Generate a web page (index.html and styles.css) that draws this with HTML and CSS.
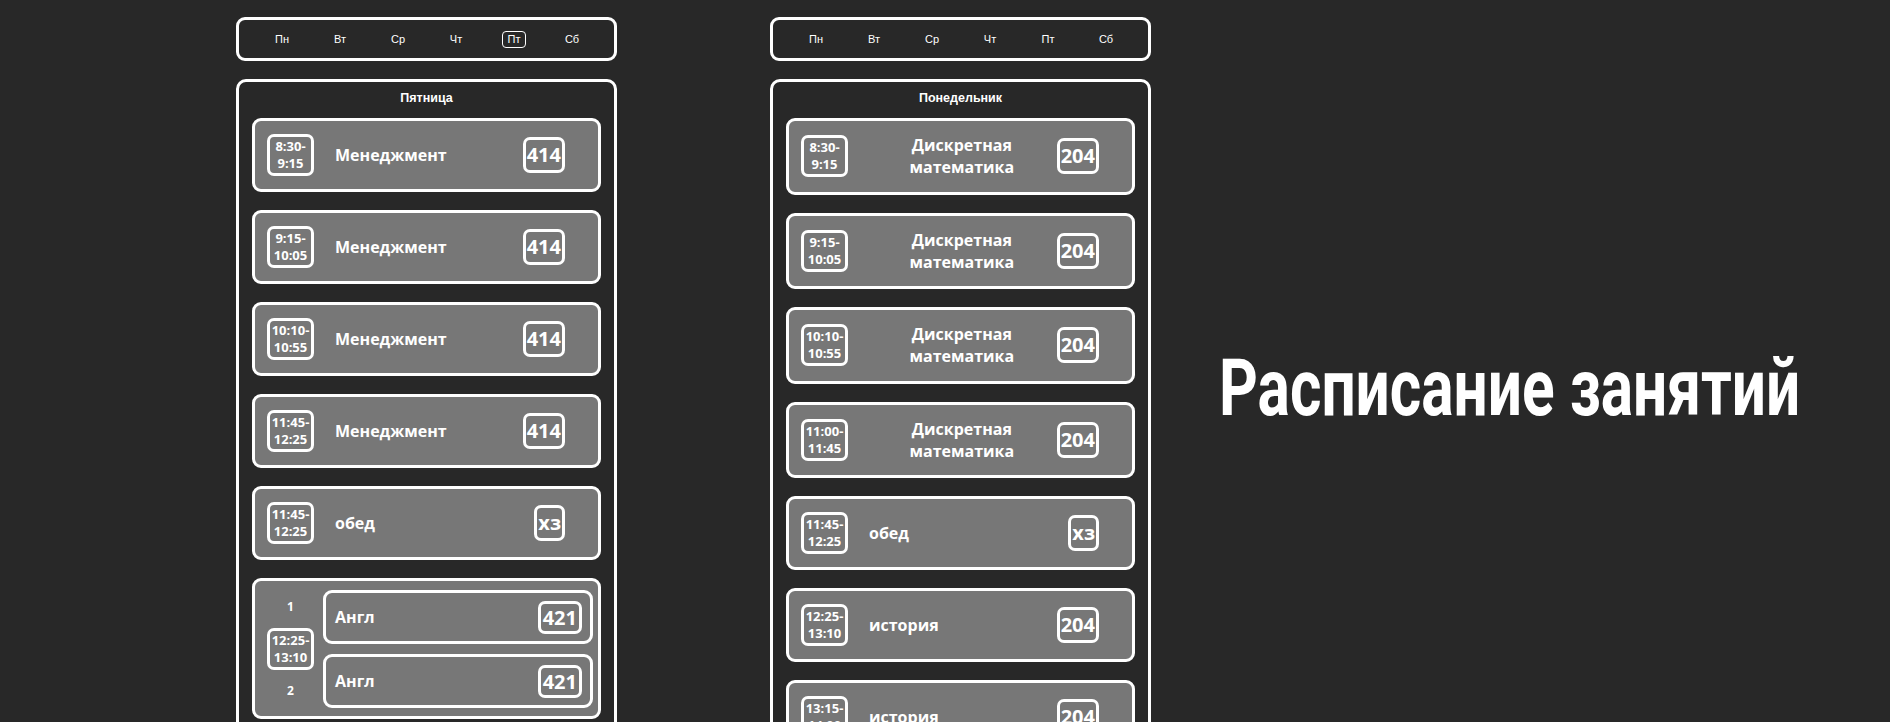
FILE: index.html
```html
<!DOCTYPE html>
<html lang="ru">
<head>
<meta charset="utf-8">
<title>Расписание занятий</title>
<link rel="stylesheet" href="styles.css">
</head>
<body>
<div class="page">
  <section class="column">
    <nav class="days">
      <span class="day"><span class="day-label">Пн</span></span>
      <span class="day"><span class="day-label">Вт</span></span>
      <span class="day"><span class="day-label">Ср</span></span>
      <span class="day"><span class="day-label">Чт</span></span>
      <span class="day"><span class="day-label active">Пт</span></span>
      <span class="day"><span class="day-label">Сб</span></span>
    </nav>
    <div class="panel">
      <h2 class="panel-title">Пятница</h2>
      <div class="lessons">
        <div class="lesson">
          <div class="time"><span>8:30-</span><span>9:15</span></div>
          <div class="subject">Менеджмент</div>
          <div class="room">414</div>
        </div>
        <div class="lesson">
          <div class="time"><span>9:15-</span><span>10:05</span></div>
          <div class="subject">Менеджмент</div>
          <div class="room">414</div>
        </div>
        <div class="lesson">
          <div class="time"><span>10:10-</span><span>10:55</span></div>
          <div class="subject">Менеджмент</div>
          <div class="room">414</div>
        </div>
        <div class="lesson">
          <div class="time"><span>11:45-</span><span>12:25</span></div>
          <div class="subject">Менеджмент</div>
          <div class="room">414</div>
        </div>
        <div class="lesson">
          <div class="time"><span>11:45-</span><span>12:25</span></div>
          <div class="subject">обед</div>
          <div class="room">хз</div>
        </div>
        <div class="lesson group">
          <div class="group-side">
            <span class="num">1</span>
            <div class="time"><span>12:25-</span><span>13:10</span></div>
            <span class="num">2</span>
          </div>
          <div class="subgroups">
            <div class="sublesson">
              <div class="subject">Англ</div>
              <div class="room">421</div>
            </div>
            <div class="sublesson">
              <div class="subject">Англ</div>
              <div class="room">421</div>
            </div>
          </div>
        </div>
      </div>
    </div>
  </section>

  <section class="column">
    <nav class="days">
      <span class="day"><span class="day-label">Пн</span></span>
      <span class="day"><span class="day-label">Вт</span></span>
      <span class="day"><span class="day-label">Ср</span></span>
      <span class="day"><span class="day-label">Чт</span></span>
      <span class="day"><span class="day-label">Пт</span></span>
      <span class="day"><span class="day-label">Сб</span></span>
    </nav>
    <div class="panel">
      <h2 class="panel-title">Понедельник</h2>
      <div class="lessons">
        <div class="lesson">
          <div class="time"><span>8:30-</span><span>9:15</span></div>
          <div class="subject">Дискретная математика</div>
          <div class="room">204</div>
        </div>
        <div class="lesson">
          <div class="time"><span>9:15-</span><span>10:05</span></div>
          <div class="subject">Дискретная математика</div>
          <div class="room">204</div>
        </div>
        <div class="lesson">
          <div class="time"><span>10:10-</span><span>10:55</span></div>
          <div class="subject">Дискретная математика</div>
          <div class="room">204</div>
        </div>
        <div class="lesson">
          <div class="time"><span>11:00-</span><span>11:45</span></div>
          <div class="subject">Дискретная математика</div>
          <div class="room">204</div>
        </div>
        <div class="lesson">
          <div class="time"><span>11:45-</span><span>12:25</span></div>
          <div class="subject">обед</div>
          <div class="room">хз</div>
        </div>
        <div class="lesson">
          <div class="time"><span>12:25-</span><span>13:10</span></div>
          <div class="subject">история</div>
          <div class="room">204</div>
        </div>
        <div class="lesson">
          <div class="time"><span>13:15-</span><span>14:00</span></div>
          <div class="subject">история</div>
          <div class="room">204</div>
        </div>
      </div>
    </div>
  </section>

  <h1 class="title">Расписание занятий</h1>
</div>
</body>
</html>
```

FILE: styles.css
```css
html, body {
  margin: 0;
  height: 100%;
  overflow: hidden;
  background: #282828;
}

body {
  color: #fff;
  font-family: "Open Sans", "Noto Sans", sans-serif;
}

.page {
  display: flex;
  align-items: flex-start;
  padding: 17px 0 0 236px;
}

.column {
  width: 381px;
  flex: none;
  display: flex;
  flex-direction: column;
  gap: 18px;
}

.column + .column {
  margin-left: 153px;
}

/* day switcher */
.days {
  height: 44px;
  box-sizing: border-box;
  border: 3px solid #fff;
  border-radius: 9px;
  display: flex;
  align-items: center;
  padding: 0 13px 0 14px;
  font-family: "Liberation Sans", Arial, sans-serif;
  font-size: 11px;
}

.day {
  flex: 1;
  text-align: center;
}

.day-label {
  display: inline-block;
  padding: 1px 5px;
  line-height: 13px;
  border: 1.5px solid transparent;
  border-radius: 4px;
}

.day-label.active {
  border-color: #fff;
}

/* schedule panel */
.panel {
  border: 3px solid #fff;
  border-radius: 10px;
  padding: 0 13px 24px;
}

.panel-title {
  margin: 0;
  padding: 8px 0 11px;
  font-family: "Liberation Sans", Arial, sans-serif;
  font-size: 12.5px;
  line-height: 17px;
  font-weight: 700;
  text-align: center;
}

.lessons {
  display: flex;
  flex-direction: column;
  gap: 18px;
}

.lesson {
  display: flex;
  align-items: center;
  background: #777;
  border: 3px solid #fff;
  border-radius: 9px;
  padding: 13px 33px 13px 12px;
}

.time {
  flex: none;
  width: 47px;
  box-sizing: border-box;
  border: 3px solid #fff;
  border-radius: 7px;
  padding: 1px 0;
  display: flex;
  flex-direction: column;
  align-items: center;
  font-size: 13px;
  line-height: 17px;
  font-weight: 700;
}

.subject {
  margin: 0 2px 0 21px;
  font-size: 16px;
  line-height: 22.3px;
  font-weight: 700;
  text-align: center;
}

.room {
  flex: none;
  margin-left: auto;
  border: 3px solid #fff;
  border-radius: 7px;
  padding: 0 1px;
  font-size: 20px;
  line-height: 30px;
  font-weight: 700;
}

/* grouped lesson */
.lesson.group {
  align-items: center;
  padding: 9px 5px 8px 12px;
}

.group-side {
  flex: none;
  width: 47px;
  display: flex;
  flex-direction: column;
  align-items: center;
  gap: 13px;
}

.num {
  font-size: 12px;
  line-height: 16px;
  font-weight: 700;
}

.subgroups {
  flex: 1;
  margin-left: 9px;
  display: flex;
  flex-direction: column;
  gap: 10px;
}

.sublesson {
  display: flex;
  align-items: center;
  border: 3px solid #fff;
  border-radius: 9px;
  padding: 7.5px 8px 7.5px 9px;
}

.sublesson .subject {
  margin-left: 0;
}

.sublesson .room {
  padding: 0 2px;
  line-height: 27px;
}

/* heading */
.title {
  margin: 331px 0 0 68px;
  font-family: Roboto, "Liberation Sans", sans-serif;
  font-size: 80px;
  line-height: 80px;
  font-weight: 700;
  white-space: nowrap;
  transform: scaleX(0.755);
  transform-origin: left top;
}
```
